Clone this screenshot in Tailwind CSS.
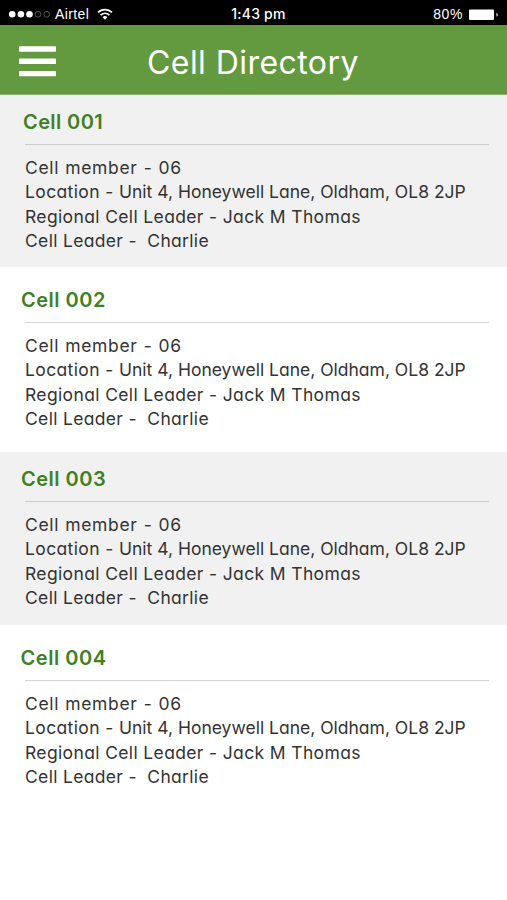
<!DOCTYPE html>
<html lang="en">

<head>
    <meta charset="UTF-8">
    <title>Cell Directory</title>
    <meta name="viewport" content="width=device-width, initial-scale=1.0">
    <script src="https://cdn.jsdelivr.net/npm/@tailwindcss/browser@4"></script>
</head>

<body class="bg-white min-h-screen overflow-hidden font-['Inter','Open_Sans',sans-serif] [font-feature-settings:'cv11']">
    <!-- Status bar -->
    <div class="bg-black text-white h-[25px] grid grid-cols-3 items-center pt-[3px] pl-2 pr-2 text-[14px] font-['Liberation_Sans',sans-serif]">
        <div class="flex items-center">
            <svg class="w-[43px] h-[10px]" viewBox="0 0 43 10" fill="#fff">
                <circle cx="4.2" cy="4.3" r="3.3" />
                <circle cx="12.9" cy="4.3" r="3.3" />
                <circle cx="21.5" cy="4.3" r="3.3" />
                <circle cx="30" cy="4.3" r="2.9" fill="none" stroke="#777" stroke-width=".7" />
                <circle cx="38.7" cy="4.3" r="2.9" fill="none" stroke="#777" stroke-width=".7" />
            </svg>
            <span class="ml-1 tracking-[.4px]">Airtel</span>
            <svg class="w-[16px] h-[12px] ml-[8px] mb-[2px]" viewBox="0 0 16 12" fill="none" stroke="#fff" stroke-width="1.7">
                <path d="M1 4.4a10 10 0 0 1 14 0" />
                <path d="M3.6 7.1a6.2 6.2 0 0 1 8.8 0" />
                <path d="M8 11.8L5.6 9.2a3.4 3.4 0 0 1 4.8 0z" fill="#fff" stroke="none" />
            </svg>
        </div>
        <div class="text-center font-medium text-[14px] tracking-[.2px] pl-[10px] pb-[2px] font-['Inter',sans-serif]">1:43 pm</div>
        <div class="flex items-center justify-end">
            <span class="tracking-[.6px]">80%</span>
            <svg class="w-[30px] h-[12px] ml-[6px]" viewBox="0 0 30 12" fill="#fff">
                <rect x="0" y=".5" width="25" height="10.5" rx="1" />
                <path d="M27.5 3.7q2.6 2 0 4z" />
            </svg>
        </div>
    </div>

    <!-- Header -->
    <header class="bg-[#63993f] h-[70px] flex items-center border-b border-[#8db573]">
        <button type="button" class="ml-[19px] mt-[3px]" aria-label="Menu">
            <svg class="w-[37px] h-[31px]" viewBox="0 0 37 31" fill="#fff">
                <rect y=".3" width="37" height="5.4" rx=".6" />
                <rect y="12.6" width="37" height="5.4" rx=".6" />
                <rect y="24.9" width="37" height="5.4" rx=".6" />
            </svg>
        </button>
        <h1 class="ml-[91px] mt-[6px] text-white text-[32px] font-normal tracking-[.44px] whitespace-nowrap">Cell Directory</h1>
    </header>

    <!-- Cells -->
    <main class="text-[17.5px] leading-[24.5px] text-[#333] whitespace-nowrap">
        <section class="bg-[#f1f1f1] h-[172px] pt-[15px] pl-[25px] pr-[18px]">
            <h2 class="-ml-[2px] text-[20px] leading-6 font-semibold tracking-[.4px] text-[#41801f]">Cell 001</h2>
            <hr class="mt-[10px] mb-[10.5px] border-[#ccc]">
            <p class="tracking-[.65px] [word-spacing:.6px]">Cell member - 06</p>
            <p><span class="tracking-[.38px]">Location - </span>Unit 4, Honeywell Lane, Oldham, OL8 2JP</p>
            <p class="tracking-[.36px]">Regional Cell Leader - Jack M Thomas</p>
            <p class="tracking-[.32px]">Cell Leader -&nbsp; Charlie</p>
        </section>
        <section class="bg-white h-[185px] pt-[21px] pl-[25px] pr-[18px]">
            <h2 class="-ml-[4px] text-[20px] leading-6 font-semibold tracking-[.5px] text-[#41801f]">Cell 002</h2>
            <hr class="mt-[10px] mb-[10.5px] border-[#d4d4d4]">
            <p class="tracking-[.65px] [word-spacing:.6px]">Cell member - 06</p>
            <p><span class="tracking-[.38px]">Location - </span>Unit 4, Honeywell Lane, Oldham, OL8 2JP</p>
            <p class="tracking-[.36px]">Regional Cell Leader - Jack M Thomas</p>
            <p class="tracking-[.32px]">Cell Leader -&nbsp; Charlie</p>
        </section>
        <section class="bg-[#f1f1f1] h-[173px] pt-[15px] pl-[25px] pr-[18px]">
            <h2 class="-ml-[4px] text-[20px] leading-6 font-semibold tracking-[.5px] text-[#41801f]">Cell 003</h2>
            <hr class="mt-[10px] mb-[10.5px] border-[#ccc]">
            <p class="tracking-[.65px] [word-spacing:.6px]">Cell member - 06</p>
            <p><span class="tracking-[.38px]">Location - </span>Unit 4, Honeywell Lane, Oldham, OL8 2JP</p>
            <p class="tracking-[.36px]">Regional Cell Leader - Jack M Thomas</p>
            <p class="tracking-[.32px]">Cell Leader -&nbsp; Charlie</p>
        </section>
        <section class="bg-white pt-[21px] pl-[25px] pr-[18px]">
            <h2 class="-ml-[4.5px] text-[20px] leading-6 font-semibold tracking-[.55px] text-[#41801f]">Cell 004</h2>
            <hr class="mt-[10px] mb-[10.5px] border-[#d4d4d4]">
            <p class="tracking-[.65px] [word-spacing:.6px]">Cell member - 06</p>
            <p><span class="tracking-[.38px]">Location - </span>Unit 4, Honeywell Lane, Oldham, OL8 2JP</p>
            <p class="tracking-[.36px]">Regional Cell Leader - Jack M Thomas</p>
            <p class="tracking-[.32px]">Cell Leader -&nbsp; Charlie</p>
        </section>
    </main>
</body>

</html>
